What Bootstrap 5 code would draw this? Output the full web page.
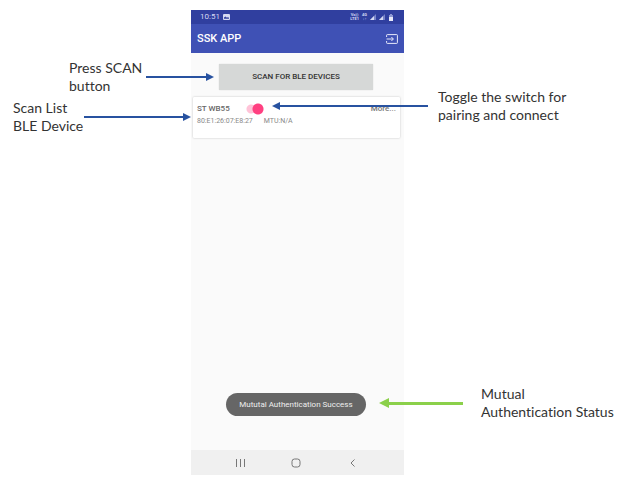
<!DOCTYPE html>
<html lang="en">
<head>
<meta charset="utf-8">
<meta name="viewport" content="width=device-width, initial-scale=1">
<title>SSK APP</title>
<link href="https://cdn.jsdelivr.net/npm/bootstrap@5.3.0/dist/css/bootstrap.min.css" rel="stylesheet">
<style>
  body { background: #fff; color: #333; font-family: Roboto, sans-serif; }
  .guide { display: grid; grid-template-columns: 191fr 213fr 220fr; min-height: 100vh; padding: 10px 0 6px; }
  .callouts { font: 14px/18px Lato, sans-serif; font-variant-ligatures: none; z-index: 2; }
  .callouts p { margin: 0; white-space: nowrap; }
  .left-notes { padding-top: 49px; }
  .note-scan { padding-left: 69px; gap: 4px; margin-right: -23px; }
  .note-list { padding-left: 13px; gap: 1px; margin-top: 4px; }
  .right-notes { padding-top: 78px; padding-bottom: 54px; }
  .note-switch { margin-left: -132px; gap: 10px; }
  .note-status { margin-left: -25px; gap: 18px; }
  .pointer { color: #2852a0; }
  .pointer-line { height: 2px; background: currentColor; }
  .pointer svg { display: block; flex: none; fill: currentColor; }
  .long-line { width: 148px; }
  .pointer-green { color: #8bd04a; }
  .pointer-green .pointer-line { height: 3px; width: 74px; }

  .phone { background: #fafafa; }
  .status-strip { height: 14px; background: #303f9f; color: #d5d9f2; font-size: 8px; line-height: 14px; padding: 0 10px 0 9px; gap: 3px; }
  .status-strip svg, .app-strip svg, .soft-keys svg { display: block; }
  .net-label { font-size: 4px; line-height: 4px; font-weight: 700; text-align: center; }
  .app-strip { height: 29px; background: #3f51b5; color: #fff; padding: 0 6px; }
  .app-strip h1 { font-size: 11px; line-height: 14px; font-weight: 500; margin: 0; }
  .app-strip button, .soft-keys button, .more-btn { background: none; border: 0; padding: 0; }
  .app-strip button { color: #e8eafa; }
  .scan-btn { margin: 11px 31px 0 28px; height: 26px; padding: 0; border: 0; border-radius: 1px; background: #d6d8d7; color: #333; font-size: 8px; line-height: 12px; font-weight: 500; box-shadow: 0 0 1px #bbb; }
  .device { margin: 7px 4px 0 2px; padding: 6px 4px 11px; border: 0; border-radius: 1px; box-shadow: 0 0 2px #bbb; color: #777; }
  .device-name { font-size: 8px; line-height: 12px; font-weight: 500; color: #666; }
  .device-info { font-size: 7px; line-height: 12px; gap: 11px; color: #888; }
  .more-btn { font-size: 8px; line-height: 12px; font-weight: 500; color: #777; }
  .device .form-switch { min-height: 0; padding: 0; margin: 0 0 0 16px; line-height: 0; }
  .device .form-switch input.form-check-input { float: none; display: block; margin: 0; width: 18px; height: 12px; border: 0; border-radius: 0; background: radial-gradient(circle at 12px 6px, #ff4081 5px, transparent 6px) 0 0 / 18px 12px no-repeat, radial-gradient(circle at 5px 6px, #ffc3d8 4px, transparent 5px) 0 0 / 18px 12px no-repeat, linear-gradient(#ffc3d8, #ffc3d8) 5px 2px / 8px 8px no-repeat; }
  .device .form-switch input.form-check-input:not(:checked) { filter: grayscale(1); transform: scaleX(-1); }
  .toast-pill { align-self: center; margin: auto 3px 34px 0; padding: 0 13px; border-radius: 12px; background: #666; color: #eee; font-size: 8px; line-height: 23px; white-space: nowrap; }
  .soft-keys { height: 25px; background: #f0f0f0; padding: 0 46px 0 42px; }
  .soft-keys button { color: #777; }
</style>
<script src="https://cdn.jsdelivr.net/npm/bootstrap@5.3.0/dist/js/bootstrap.bundle.min.js"></script>
</head>
<body>
<main class="guide">
  <section class="callouts left-notes" aria-label="Scan notes">
    <div class="note-scan d-flex align-items-center">
      <p>Press SCAN<br>button</p>
      <div class="pointer d-flex align-items-center flex-grow-1"><div class="pointer-line flex-grow-1"></div><svg width="8" height="8" viewBox="0 0 8 8"><path d="M0 0 8 4 0 8z"/></svg></div>
    </div>
    <div class="note-list d-flex align-items-center">
      <p>Scan List<br>BLE Device</p>
      <div class="pointer d-flex align-items-center flex-grow-1"><div class="pointer-line flex-grow-1"></div><svg width="8" height="8" viewBox="0 0 8 8"><path d="M0 0 8 4 0 8z"/></svg></div>
    </div>
  </section>

  <section class="phone d-flex flex-column" aria-label="Phone">
    <div class="status-strip d-flex align-items-center">
      <span>10:51</span>
      <svg width="7" height="6" viewBox="0 0 7 6"><rect width="7" height="6" rx="1" fill="#d5d9f2"/><path d="M1 4.8V3.5L2.5 2.4 4 3.7 5 3l1 .9v.9z" fill="#303f9f"/></svg>
      <span class="net-label ms-auto">Vo))<br>LTE1</span>
      <span class="net-label">4G<br>↓↑</span>
      <svg width="6" height="6" viewBox="0 0 6 6"><path d="M6 0v6H0z" fill="#7984c8"/><path d="M4 2v4H0z" fill="#d5d9f2"/></svg>
      <svg width="6" height="6" viewBox="0 0 6 6"><path d="M6 0v6H0z" fill="#7984c8"/><path d="M4 2v4H0z" fill="#d5d9f2"/></svg>
      <svg width="6" height="7" viewBox="0 0 6 7"><path d="M2 0h2v1h1v6H1V1h1z" fill="#8e98d3"/><path d="M1 3h4v4H1z" fill="#e8eafa"/></svg>
    </div>
    <header class="app-strip d-flex align-items-center justify-content-between">
      <h1>SSK APP</h1>
      <button type="button" aria-label="Exit"><svg width="12" height="10" viewBox="0 0 12 10" fill="none" stroke="currentColor"><path d="M.6 3V1.3Q.6.6 1.3.6h9.4q.7 0 .7.7v7.4q0 .7-.7.7H1.3Q.6 9.4.6 8.7V7M.6 5h6.6M5.4 3 7.4 5 5.4 7"/></svg></button>
    </header>
    <button class="btn scan-btn" type="button">SCAN FOR BLE DEVICES</button>
    <article class="card device">
      <div class="d-flex align-items-center">
        <label class="device-name" for="pair">ST WB55</label>
        <div class="form-check form-switch"><input class="form-check-input" type="checkbox" role="switch" id="pair" checked></div>
        <button class="more-btn ms-auto" type="button">More...</button>
      </div>
      <div class="device-info d-flex"><span>80:E1:26:07:E8:27</span><span>MTU:N/A</span></div>
    </article>
    <div class="toast-pill" role="status">Mututal Authentication Success</div>
    <nav class="soft-keys d-flex align-items-center justify-content-between" aria-label="System">
      <button type="button" aria-label="Recent apps"><svg width="12" height="10" viewBox="0 0 12 10" stroke="currentColor"><path d="M3.5 1v8M7.5 1v8M11.5 1v8"/></svg></button>
      <button type="button" aria-label="Home"><svg width="10" height="10" viewBox="0 0 10 10" fill="none" stroke="currentColor"><rect x="1" y="1" width="8" height="8" rx="2.5"/></svg></button>
      <button type="button" aria-label="Back"><svg width="12" height="10" viewBox="0 0 12 10" fill="none" stroke="currentColor"><path d="M8.500 1.500 5 5l3.500 3.500"/></svg></button>
    </nav>
  </section>

  <section class="callouts right-notes d-flex flex-column justify-content-between" aria-label="Connection notes">
    <div class="note-switch d-flex align-items-center">
      <div class="pointer d-flex align-items-center"><svg width="8" height="8" viewBox="0 0 8 8"><path d="M8 0 0 4l8 4z"/></svg><div class="pointer-line long-line"></div></div>
      <p>Toggle the switch for<br>pairing and connect</p>
    </div>
    <div class="note-status d-flex align-items-center">
      <div class="pointer pointer-green d-flex align-items-center"><svg width="10" height="10" viewBox="0 0 10 10"><path d="M10 0 0 5l10 5z"/></svg><div class="pointer-line"></div></div>
      <p>Mutual<br>Authentication Status</p>
    </div>
  </section>
</main>
</body>
</html>
